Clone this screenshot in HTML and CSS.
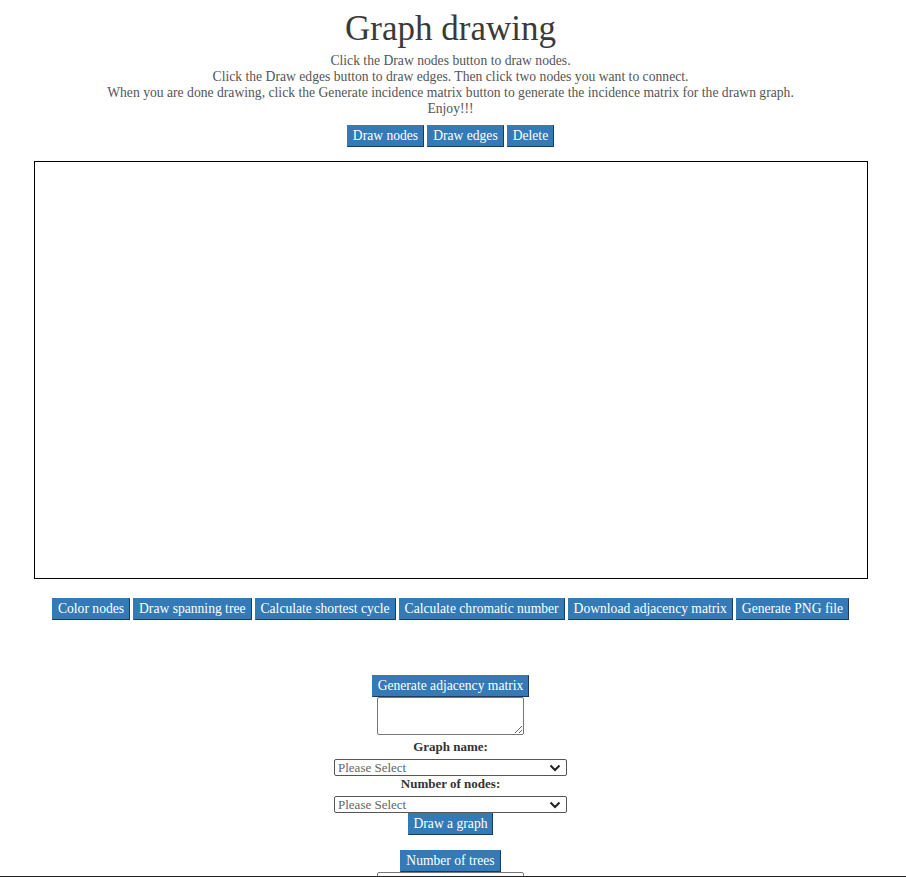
FILE: index.html
```html
<!DOCTYPE html>
<html>
<head>
<meta charset="utf-8">
<title>Graph drawing</title>
<link rel="stylesheet" href="styles.css">
</head>
<body>
<div class="page">
  <h1 class="title">Graph drawing</h1>
  <div class="intro">
    <p>Click the Draw nodes button to draw nodes.</p>
    <p>Click the Draw edges button to draw edges. Then click two nodes you want to connect.</p>
    <p>When you are done drawing, click the Generate incidence matrix button to generate the incidence matrix for the drawn graph.</p>
    <p>Enjoy!!!</p>
  </div>
  <div class="toolbar top-tools">
    <button class="btn">Draw nodes</button>
    <button class="btn">Draw edges</button>
    <button class="btn">Delete</button>
  </div>
  <div class="canvas"></div>
  <div class="toolbar bottom-tools">
    <button class="btn">Color nodes</button>
    <button class="btn">Draw spanning tree</button>
    <button class="btn">Calculate shortest cycle</button>
    <button class="btn">Calculate chromatic number</button>
    <button class="btn">Download adjacency matrix</button>
    <button class="btn">Generate PNG file</button>
  </div>
  <div class="stack">
    <button class="btn">Generate adjacency matrix</button>
    <textarea class="area"></textarea>
    <label class="lbl">Graph name:</label>
    <div class="sel-wrap">
      <select class="sel"><option>Please Select</option></select>
      <svg class="chev" width="12" height="8" viewBox="0 0 12 8"><path d="M1.5 1.5 L6 6 L10.5 1.5" fill="none" stroke="#222" stroke-width="2"/></svg>
    </div>
    <label class="lbl">Number of nodes:</label>
    <div class="sel-wrap">
      <select class="sel"><option>Please Select</option></select>
      <svg class="chev" width="12" height="8" viewBox="0 0 12 8"><path d="M1.5 1.5 L6 6 L10.5 1.5" fill="none" stroke="#222" stroke-width="2"/></svg>
    </div>
    <button class="btn">Draw a graph</button>
    <button class="btn trees">Number of trees</button>
    <textarea class="area"></textarea>
  </div>
</div>
<div class="edge"></div>
</body>
</html>
```
FILE: styles.css
```css
html, body {
  margin: 0;
  padding: 0;
  background: #fff;
}
body {
  font-family: "Liberation Serif", "DejaVu Serif", serif;
  color: #444;
  overflow: hidden;
}
.page {
  width: 901px;
  display: flex;
  flex-direction: column;
  align-items: center;
}
.title {
  margin: 9px 0 0;
  font-size: 35px;
  font-weight: normal;
  line-height: 40px;
  color: #3a3a3a;
}
.intro {
  margin-top: 4px;
  text-align: center;
  font-size: 13.65px;
  line-height: 16px;
  color: #555;
}
.intro p { margin: 0; }
.toolbar {
  display: flex;
  justify-content: center;
  gap: 3px;
}
.top-tools { margin-top: 8px; }
.btn {
  font-family: "Liberation Serif", "DejaVu Serif", serif;
  font-size: 13.6px;
  line-height: 17px;
  color: #fff;
  background: #337ab7;
  border: 1px solid #337ab7;
  border-right-color: #173c5c;
  border-bottom-color: #173c5c;
  border-radius: 0;
  padding: 1px 5px 2px;
  margin: 0;
}
.canvas {
  margin-top: 14px;
  width: 832px;
  height: 416px;
  border: 1px solid #000;
}
.bottom-tools { margin-top: 19px; }
.stack {
  margin-top: 55px;
  display: flex;
  flex-direction: column;
  align-items: center;
}
.area {
  width: 141px;
  height: 32px;
  border: 1px solid #767676;
  border-radius: 2px;
  padding: 2px;
  margin: 0;
  resize: both;
}
.lbl {
  font-family: "Liberation Serif", "DejaVu Serif", serif;
  font-weight: bold;
  font-size: 13px;
  line-height: 16px;
  color: #333;
  margin-top: 4px;
}
.sel-wrap {
  position: relative;
  width: 233px;
  height: 17px;
}
.stack .lbl + .sel-wrap { margin-top: 4px; }
.sel-wrap + .lbl { margin-top: 0; }
.sel {
  appearance: none;
  -webkit-appearance: none;
  display: block;
  width: 233px;
  height: 17px;
  font-family: "Liberation Serif", serif;
  font-size: 13px;
  line-height: 15px;
  color: #666;
  border: 1px solid #555;
  border-radius: 2px;
  padding: 0 3px;
  background: #fff;
  margin: 0;
}
.chev {
  position: absolute;
  right: 6px;
  top: 5px;
  pointer-events: none;
}
.trees { margin-top: 15px; }
.edge {
  position: fixed;
  left: 0;
  right: 0;
  bottom: 0;
  height: 1px;
  background: #222;
}
```
